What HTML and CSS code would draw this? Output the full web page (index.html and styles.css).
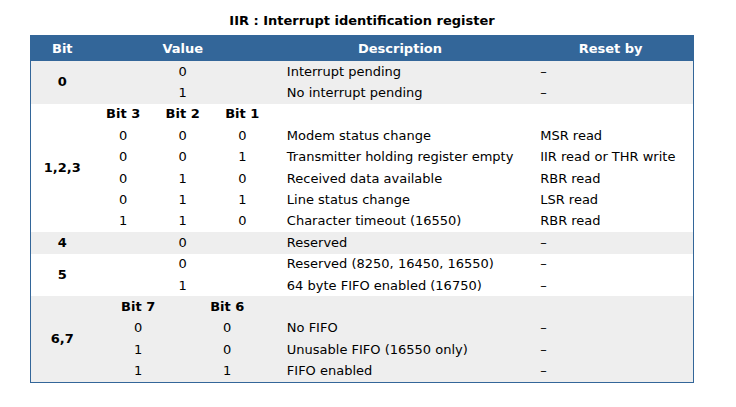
FILE: index.html
```html
<!DOCTYPE html>
<html>
<head>
<meta charset="utf-8">
<link rel="stylesheet" href="styles.css">
</head>
<body>
<table class="reg">
  <caption>IIR : Interrupt identification register</caption>
  <colgroup>
    <col class="c-bit">
    <col class="c-v1"><col class="c-v2"><col class="c-v3"><col class="c-v4"><col class="c-v5"><col class="c-v6">
    <col class="c-desc">
    <col class="c-reset">
  </colgroup>
  <thead>
    <tr class="head">
      <th>Bit</th>
      <th colspan="6">Value</th>
      <th>Description</th>
      <th>Reset by</th>
    </tr>
  </thead>
  <tbody class="grey">
    <tr><td class="bit" rowspan="2">0</td><td class="num" colspan="6">0</td><td class="desc">Interrupt pending</td><td class="reset">–</td></tr>
    <tr><td class="num" colspan="6">1</td><td class="desc">No interrupt pending</td><td class="reset">–</td></tr>
  </tbody>
  <tbody class="white">
    <tr><td class="bit" rowspan="6">1,2,3</td><th class="sub" colspan="2">Bit 3</th><th class="sub" colspan="2">Bit 2</th><th class="sub" colspan="2">Bit 1</th><td class="desc"></td><td class="reset"></td></tr>
    <tr><td class="num" colspan="2">0</td><td class="num" colspan="2">0</td><td class="num" colspan="2">0</td><td class="desc">Modem status change</td><td class="reset">MSR read</td></tr>
    <tr><td class="num" colspan="2">0</td><td class="num" colspan="2">0</td><td class="num" colspan="2">1</td><td class="desc">Transmitter holding register empty</td><td class="reset">IIR read or THR write</td></tr>
    <tr><td class="num" colspan="2">0</td><td class="num" colspan="2">1</td><td class="num" colspan="2">0</td><td class="desc">Received data available</td><td class="reset">RBR read</td></tr>
    <tr><td class="num" colspan="2">0</td><td class="num" colspan="2">1</td><td class="num" colspan="2">1</td><td class="desc">Line status change</td><td class="reset">LSR read</td></tr>
    <tr><td class="num" colspan="2">1</td><td class="num" colspan="2">1</td><td class="num" colspan="2">0</td><td class="desc">Character timeout (16550)</td><td class="reset">RBR read</td></tr>
  </tbody>
  <tbody class="grey">
    <tr><td class="bit">4</td><td class="num" colspan="6">0</td><td class="desc">Reserved</td><td class="reset">–</td></tr>
  </tbody>
  <tbody class="white">
    <tr><td class="bit" rowspan="2">5</td><td class="num" colspan="6">0</td><td class="desc">Reserved (8250, 16450, 16550)</td><td class="reset">–</td></tr>
    <tr><td class="num" colspan="6">1</td><td class="desc">64 byte FIFO enabled (16750)</td><td class="reset">–</td></tr>
  </tbody>
  <tbody class="grey">
    <tr><td class="bit" rowspan="4">6,7</td><th class="sub" colspan="3">Bit 7</th><th class="sub" colspan="3">Bit 6</th><td class="desc"></td><td class="reset"></td></tr>
    <tr><td class="num" colspan="3">0</td><td class="num" colspan="3">0</td><td class="desc">No FIFO</td><td class="reset">–</td></tr>
    <tr><td class="num" colspan="3">1</td><td class="num" colspan="3">0</td><td class="desc">Unusable FIFO (16550 only)</td><td class="reset">–</td></tr>
    <tr><td class="num" colspan="3">1</td><td class="num" colspan="3">1</td><td class="desc">FIFO enabled</td><td class="reset">–</td></tr>
  </tbody>
</table>
</body>
</html>
```

FILE: styles.css
```css
html, body {
  margin: 0;
  padding: 0;
  background: #ffffff;
}
body {
  padding: 8px 0 0 30px;
  font-family: "DejaVu Sans", Verdana, sans-serif;
  font-size: 13px;
  color: #000000;
}
.reg {
  width: 664px;
  table-layout: fixed;
  border-collapse: collapse;
  border: 1px solid #336699;
}
.reg caption {
  font-weight: bold;
  font-size: 13px;
  line-height: 16px;
  padding: 5px 0 6px;
  text-align: center;
}
.c-bit { width: 63px; }
.c-v1, .c-v3, .c-v4, .c-v6 { width: 30px; }
.c-v2, .c-v5 { width: 29px; }
.c-desc { width: 256px; }
.c-reset { width: 165px; }
.reg td, .reg th {
  padding: 0;
  height: 21.4px;
  line-height: 16px;
  white-space: nowrap;
}
.head th {
  background: #336699;
  color: #ffffff;
  font-weight: bold;
  height: 25px;
  text-align: center;
}
.grey td, .grey th { background: #eeeeee; }
.white td, .white th { background: #ffffff; }
.bit {
  font-weight: bold;
  text-align: center;
}
.num { text-align: center; }
.sub {
  font-weight: bold;
  text-align: center;
}
.desc {
  padding-left: 15px !important;
  text-align: left;
}
.reset {
  padding-left: 12px !important;
  text-align: left;
}
```
